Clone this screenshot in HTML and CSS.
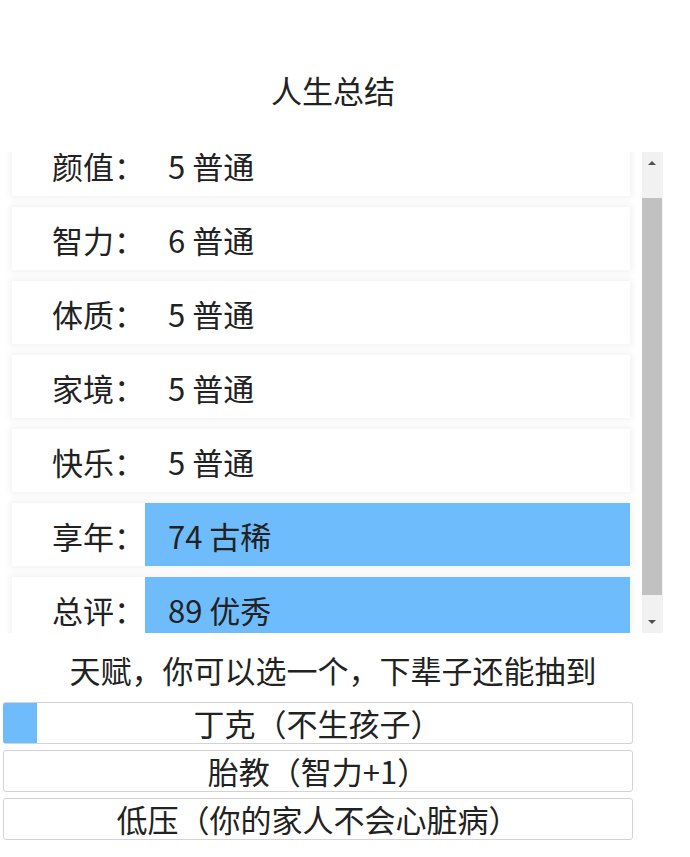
FILE: index.html
```html
<!DOCTYPE html>
<html lang="zh-CN">
<head>
<meta charset="utf-8">
<title>人生总结</title>
<link rel="stylesheet" href="styles.css">
</head>
<body>
<div class="page">
  <h1 class="title">人生总结</h1>
  <div class="panel">
    <div class="viewport">
      <ul class="rows">
        <li class="row"><span class="label">颜值：</span><span class="value">5 普通</span></li>
        <li class="row"><span class="label">智力：</span><span class="value">6 普通</span></li>
        <li class="row"><span class="label">体质：</span><span class="value">5 普通</span></li>
        <li class="row"><span class="label">家境：</span><span class="value">5 普通</span></li>
        <li class="row"><span class="label">快乐：</span><span class="value">5 普通</span></li>
        <li class="row"><span class="label">享年：</span><span class="value hl">74 古稀</span></li>
        <li class="row"><span class="label">总评：</span><span class="value hl">89 优秀</span></li>
      </ul>
    </div>
    <div class="scrollbar">
      <div class="sb-btn"><span class="tri-up"></span></div>
      <div class="sb-gap"></div>
      <div class="sb-thumb"></div>
      <div class="sb-fill"></div>
      <div class="sb-btn"><span class="tri-down"></span></div>
    </div>
  </div>
  <p class="talent-title">天赋，你可以选一个，下辈子还能抽到</p>
  <div class="talents">
    <button class="talent progress">丁克（不生孩子）</button>
    <button class="talent">胎教（智力+1）</button>
    <button class="talent">低压（你的家人不会心脏病）</button>
  </div>
</div>
</body>
</html>
```

FILE: styles.css
```css
* { box-sizing: border-box; }
html, body {
  margin: 0;
  padding: 0;
  background: #fff;
}
body {
  font-family: "Noto Sans CJK SC", "Noto Sans", sans-serif;
  color: #222;
}
.page {
  width: 666px;
  padding-top: 70px;
}
.title {
  margin: 0;
  height: 40px;
  line-height: 40px;
  font-size: 31px;
  font-weight: normal;
  text-align: center;
}
.panel {
  margin: 42px 0 0 3px;
  width: 660px;
  height: 481px;
  display: flex;
}
.viewport {
  flex: 1;
  overflow: hidden;
  padding: 0 12px 0 9px;
}
.rows {
  list-style: none;
  margin: -19px 0 0 0;
  padding: 0;
}
.row {
  height: 63px;
  margin-bottom: 11px;
  display: flex;
  background: #fff;
  box-shadow: 0 0 7px 2px rgba(0, 0, 0, 0.06);
  font-size: 31px;
  line-height: 26px;
}
.label {
  width: 133px;
  text-align: right;
  display: flex;
  align-items: center;
  justify-content: flex-end;
  padding-top: 3px;
}
.value {
  flex: 1;
  padding-left: 23px;
  display: flex;
  align-items: center;
  padding-top: 3px;
}
.value.hl {
  background: #6fbcfd;
}
.scrollbar {
  width: 21px;
  background: #f1f1f1;
  display: flex;
  flex-direction: column;
}
.sb-btn {
  height: 22px;
  display: flex;
  align-items: center;
  justify-content: center;
  padding-right: 1px;
}
.sb-gap { height: 24px; }
.sb-thumb {
  height: 397px;
  width: 20px;
  background: #c1c1c1;
}
.sb-fill { flex: 1; }
.tri-up {
  width: 0;
  height: 0;
  border-left: 4px solid transparent;
  border-right: 4px solid transparent;
  border-bottom: 4px solid #505050;
}
.tri-down {
  width: 0;
  height: 0;
  border-left: 4px solid transparent;
  border-right: 4px solid transparent;
  border-top: 4px solid #505050;
}
.talent-title {
  margin: 17px 0 0 0;
  height: 40px;
  line-height: 40px;
  font-size: 31px;
  text-align: center;
}
.talents {
  margin: 12px 0 0 3px;
  width: 630px;
  display: flex;
  flex-direction: column;
  gap: 6px;
}
.talent {
  height: 42px;
  width: 100%;
  padding: 0;
  margin: 0;
  border: 1px solid #d3d3d3;
  border-radius: 3px;
  background: #fff;
  font-family: "Noto Sans CJK SC", "Noto Sans", sans-serif;
  font-size: 31px;
  line-height: 40px;
  color: #222;
  text-align: center;
}
.talent.progress {
  border-left: none;
  background: linear-gradient(to right, #6fbcfd 34px, #fff 34px);
}
```
